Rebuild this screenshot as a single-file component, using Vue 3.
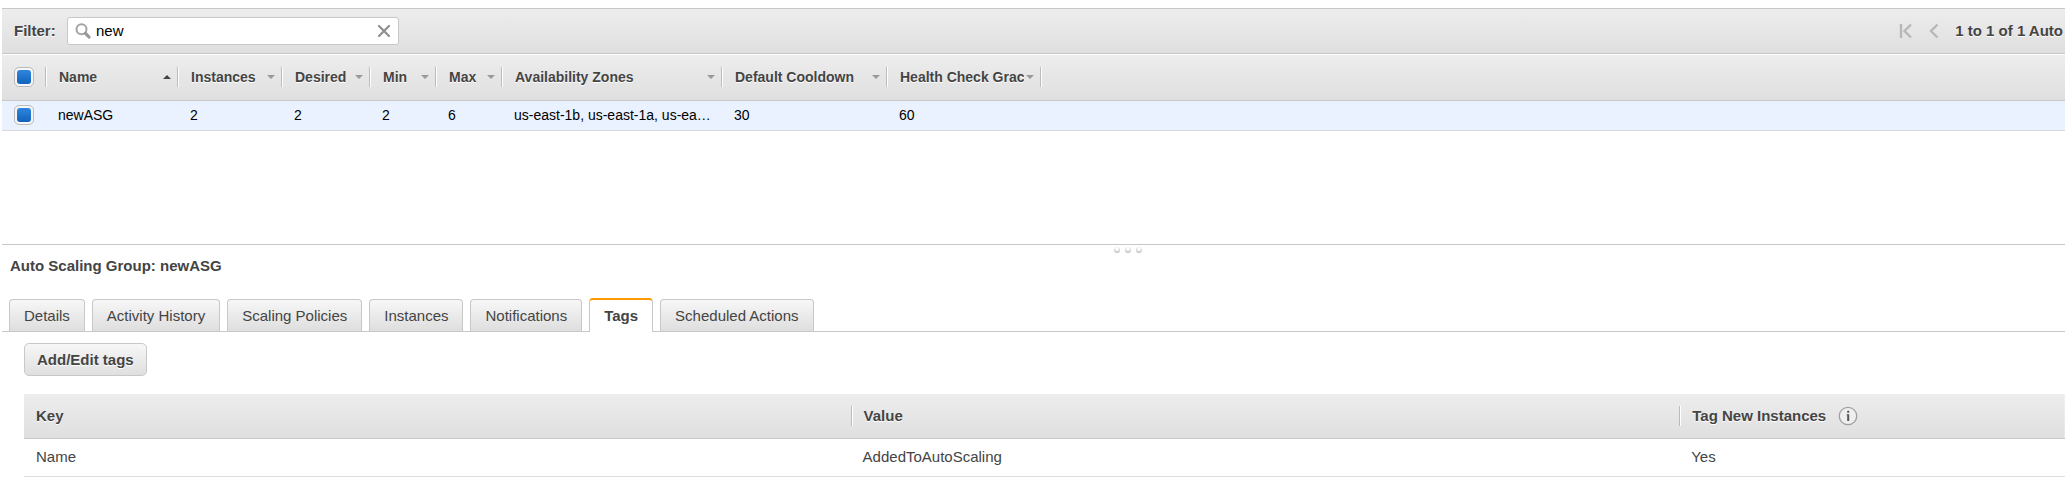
<script setup>
import { ref } from 'vue'

const filter = ref('new')
const allSelected = ref(true)
const rowSelected = ref(true)

const columns = [
  { key: 'name', label: 'Name', sorted: true },
  { key: 'instances', label: 'Instances' },
  { key: 'desired', label: 'Desired' },
  { key: 'min', label: 'Min' },
  { key: 'max', label: 'Max' },
  { key: 'zones', label: 'Availability Zones' },
  { key: 'cooldown', label: 'Default Cooldown' },
  { key: 'grace', label: 'Health Check Grace' },
]

const group = {
  name: 'newASG',
  instances: '2',
  desired: '2',
  min: '2',
  max: '6',
  zones: 'us-east-1b, us-east-1a, us-ea…',
  cooldown: '30',
  grace: '60',
}

const tabs = [
  'Details',
  'Activity History',
  'Scaling Policies',
  'Instances',
  'Notifications',
  'Tags',
  'Scheduled Actions',
]
const activeTab = ref('Tags')
</script>

<template>
  <main class="console">
    <header class="toolbar">
      <label class="filter-label" for="filter">Filter:</label>
      <div class="search">
        <svg class="search-icon" width="16" height="16" viewBox="0 0 16 16" aria-hidden="true">
          <circle cx="6.5" cy="6.3" r="5" fill="none" stroke="#a3a3a3" stroke-width="2" />
          <path d="M10.5 10.3 L14 14" stroke="#999" stroke-width="3.2" stroke-linecap="round" />
        </svg>
        <input id="filter" v-model="filter" class="search-input" type="text" />
        <button class="icon-button" type="button" aria-label="Clear filter" @click="filter = ''">
          <svg width="14" height="14" viewBox="0 0 14 14" aria-hidden="true">
            <path d="M2 2 L12 12 M12 2 L2 12" stroke="#8f8f8f" stroke-width="2.2" stroke-linecap="round" />
          </svg>
        </button>
      </div>
      <nav class="pager" aria-label="Pagination">
        <button class="icon-button" type="button" aria-label="First page">
          <svg width="14" height="16" viewBox="0 0 14 16" aria-hidden="true">
            <path d="M2 1 V15 M12 1.5 L5.5 8 L12 14.5" fill="none" stroke="#b8b8b8" stroke-width="2.4" />
          </svg>
        </button>
        <button class="icon-button" type="button" aria-label="Previous page">
          <svg width="10" height="16" viewBox="0 0 10 16" aria-hidden="true">
            <path d="M8.5 1.5 L2 8 L8.5 14.5" fill="none" stroke="#b8b8b8" stroke-width="2.4" />
          </svg>
        </button>
        <span class="pager-text">1 to 1 of 1 Auto</span>
      </nav>
    </header>

    <table class="grid">
      <colgroup>
        <col class="c-check" />
        <col v-for="c in columns" :key="c.key" :class="'c-' + c.key" />
        <col />
      </colgroup>
      <thead>
        <tr>
          <th class="check-cell">
            <input v-model="allSelected" class="check" type="checkbox" aria-label="Select all" />
          </th>
          <th v-for="c in columns" :key="c.key" scope="col">
            <div class="head">
              <span class="head-label">{{ c.label }}</span>
              <svg class="arrow" width="8" height="4" viewBox="0 0 8 4" aria-hidden="true">
                <path v-if="c.sorted" d="M0 4 L4 0 L8 4 Z" fill="#444" />
                <path v-else d="M0 0 L8 0 L4 4 Z" fill="#999" />
              </svg>
            </div>
          </th>
          <td><div class="head"></div></td>
        </tr>
      </thead>
      <tbody>
        <tr>
          <td class="check-cell">
            <input v-model="rowSelected" class="check" type="checkbox" aria-label="Select newASG" />
          </td>
          <td v-for="c in columns" :key="c.key" class="value">{{ group[c.key] }}</td>
          <td></td>
        </tr>
      </tbody>
    </table>

    <section class="details">
      <div class="splitter" aria-hidden="true"><i></i><i></i><i></i></div>
      <h2 class="title">Auto Scaling Group: newASG</h2>
      <div class="tabs" role="tablist">
        <button
          v-for="t in tabs"
          :key="t"
          class="tab"
          :class="{ active: t === activeTab }"
          type="button"
          role="tab"
          :aria-selected="t === activeTab"
          @click="activeTab = t"
        >{{ t }}</button>
      </div>
      <div class="panel">
        <button class="action" type="button">Add/Edit tags</button>
        <table class="tags">
          <colgroup>
            <col class="c-key" />
            <col class="c-value" />
            <col />
          </colgroup>
          <thead>
            <tr>
              <th scope="col"><div class="tag-head first">Key</div></th>
              <th scope="col"><div class="tag-head">Value</div></th>
              <th scope="col">
                <div class="tag-head">
                  Tag New Instances
                  <svg width="20" height="20" viewBox="0 0 20 20" aria-hidden="true">
                    <circle cx="10" cy="10" r="8.7" fill="#efefef" stroke="#a0a0a0" stroke-width="1.3" />
                    <path d="M8.6 8.2 H11.2 V15 H9.2 V9.2 H8.6 Z M9.2 4.8 H11.2 V6.8 H9.2 Z" fill="#555" />
                  </svg>
                </div>
              </th>
            </tr>
          </thead>
          <tbody>
            <tr>
              <td>Name</td>
              <td>AddedToAutoScaling</td>
              <td>Yes</td>
            </tr>
          </tbody>
        </table>
      </div>
    </section>
  </main>
</template>

<style>
body {
  background: #fff;
}
</style>

<style scoped>
.console {
  padding: 8px 0 0 2px;
  overflow: hidden;
  font: 15px/20px "Liberation Sans", Arial, sans-serif;
  color: #444;
}
.console * {
  box-sizing: border-box;
}
button,
input {
  margin: 0;
  font: inherit;
  color: inherit;
}
.toolbar {
  display: flex;
  align-items: center;
  height: 46px;
  padding-left: 12px;
  border-top: 1px solid #c8c8c8;
  border-bottom: 1px solid #c8c8c8;
  background: linear-gradient(#ededed, #dfdfdf);
}
.filter-label {
  width: 53px;
  font-weight: bold;
  text-shadow: 0 1px 0 #fff;
}
.search {
  display: flex;
  align-items: center;
  width: 332px;
  height: 28px;
  padding: 0 7px;
  border: 1px solid #c8c8c8;
  border-radius: 3px;
  background: #fff;
}
.search-input {
  flex: 1;
  min-width: 0;
  padding: 0 0 0 5px;
  border: 0;
  outline: 0;
  background: none;
  color: #000;
}
.icon-button {
  display: flex;
  padding: 0;
  border: 0;
  background: none;
}
.pager {
  display: flex;
  align-items: center;
  gap: 16px;
  margin-left: auto;
}
.pager-text {
  padding-right: 2px;
  font-weight: bold;
  white-space: nowrap;
  text-shadow: 0 1px 0 #fff;
}
table {
  width: 100%;
  table-layout: fixed;
  border-collapse: separate;
  border-spacing: 0;
}
th,
td {
  padding: 0;
  text-align: left;
}
.grid {
  margin-top: 1px;
  font-size: 14px;
}
.c-check { width: 43px; }
.c-name { width: 132px; }
.c-instances { width: 104px; }
.c-desired { width: 88px; }
.c-min,
.c-max { width: 66px; }
.c-zones { width: 220px; }
.c-cooldown { width: 165px; }
.c-grace { width: 154px; }
.grid thead tr {
  height: 46px;
  background: linear-gradient(#ededed, #dfdfdf);
}
.grid thead th,
.grid thead td {
  padding-bottom: 1px;
  border-bottom: 1px solid #c8c8c8;
}
.head {
  display: flex;
  align-items: center;
  height: 20px;
  padding: 0 6px 0 13px;
  border-left: 1px solid #bbb;
  box-shadow: inset 1px 0 0 #fff;
}
.head-label {
  flex: 1;
  overflow: hidden;
  white-space: nowrap;
  text-shadow: 0 1px 0 #fff;
}
.arrow {
  flex: none;
  margin-left: 2px;
}
.grid tbody tr {
  height: 30px;
  background: #eaf2ff;
}
.grid tbody td {
  padding-bottom: 1px;
  border-bottom: 1px solid #d8d8d8;
  color: #000;
}
.grid .value {
  padding-left: 13px;
  white-space: nowrap;
}
.check-cell {
  padding-left: 12px;
}
.check {
  display: block;
  width: 20px;
  height: 20px;
  padding: 2px;
  appearance: none;
  border: 1px solid #bbb;
  border-radius: 5px;
  background: #f6f6f6;
}
.check:checked::before {
  display: block;
  height: 14px;
  border-radius: 3px;
  background: linear-gradient(#2f86dd, #1263bb);
  content: "";
}
.details {
  margin-top: 113px;
  border-top: 1px solid #c8c8c8;
}
.splitter {
  display: flex;
  justify-content: center;
  gap: 5px;
  height: 11px;
  padding: 2px 0 3px 188px;
}
.splitter i {
  width: 6px;
  height: 6px;
  border-radius: 3px;
  background: radial-gradient(circle at 50% 30%, #fff 20%, #bbb 80%);
}
.title {
  margin: 0;
  padding-left: 8px;
  font-size: 15px;
  line-height: 20px;
}
.tabs {
  display: flex;
  align-items: flex-end;
  gap: 7px;
  height: 56px;
  padding-left: 7px;
  border-bottom: 1px solid #c8c8c8;
}
.tab {
  height: 32px;
  padding: 0 14px;
  border: 1px solid #c8c8c8;
  border-bottom: 0;
  border-radius: 4px 4px 0 0;
  background: linear-gradient(#f7f7f7, #dedede);
  white-space: nowrap;
}
.tab.active {
  height: 34px;
  margin-bottom: -1px;
  border-top: 2px solid #f90;
  background: #fff;
  font-weight: bold;
}
.panel {
  padding: 11px 0 0 22px;
}
.action {
  display: block;
  height: 33px;
  padding: 0 12px;
  border: 1px solid #c8c8c8;
  border-radius: 5px;
  background: linear-gradient(#f7f7f7, #dfdfdf);
  font-weight: bold;
  text-shadow: 0 1px 0 #fff;
}
.tags {
  margin-top: 18px;
}
.c-key {
  width: 40.5%;
}
.c-value {
  width: 40.6%;
}
.tags thead tr {
  height: 45px;
  background: linear-gradient(#ededed, #dfdfdf);
}
.tags th {
  border-bottom: 1px solid #c8c8c8;
}
.tag-head {
  display: flex;
  align-items: center;
  gap: 12px;
  height: 20px;
  padding-left: 12px;
  border-left: 1px solid #bbb;
  box-shadow: inset 1px 0 0 #fff;
  text-shadow: 0 1px 0 #fff;
}
.tag-head.first {
  border-left: 0;
  box-shadow: none;
}
.tags tbody tr {
  height: 38px;
}
.tags td {
  padding: 0 0 2px 12px;
  border-bottom: 1px solid #ddd;
}
</style>
